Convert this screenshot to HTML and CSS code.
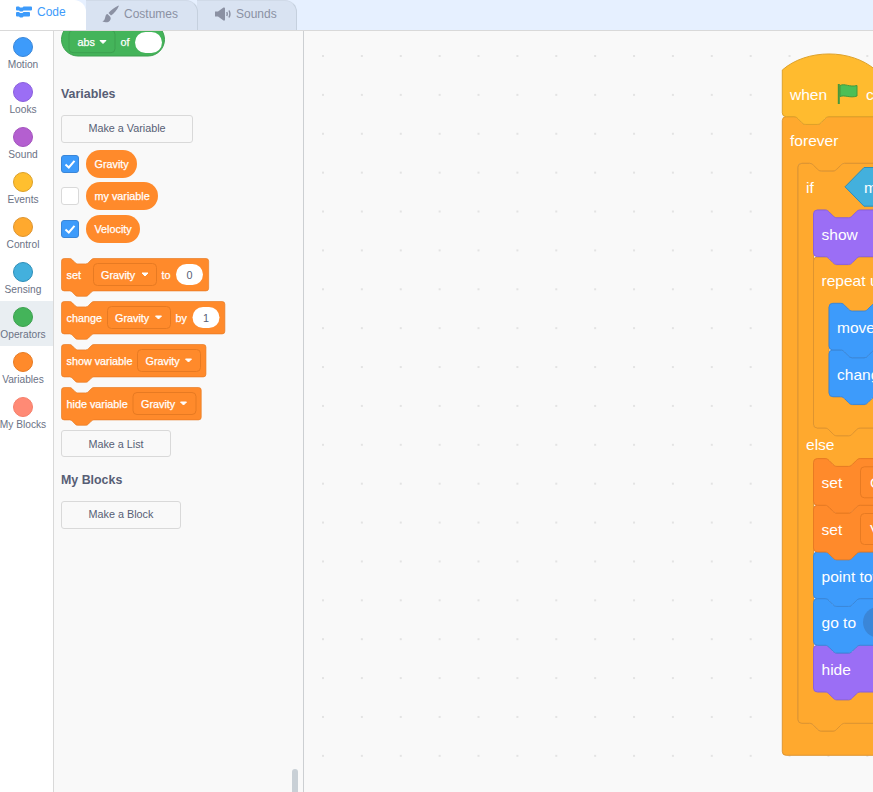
FILE: index.html
```html
<!DOCTYPE html>
<html lang="en">
<head>
    <meta charset="UTF-8">
    <title>Scratch editor</title>
    <link rel="stylesheet" href="styles.css">
</head>
<body>
    <div class="tabs">
        <div class="tab tab-active">
            <svg class="tab-icon" width="16" height="12" viewBox="0 0 16 12">
                <path class="icon-code" d="M1,0.5 H3 L4,1.5 H6.5 L7.5,0.5 H15 Q16,0.5 16,1.5 V3.5 Q16,4.5 15,4.5 H7.5 L6.5,5.5 H4 L3,4.5 H1 Q0,4.5 0,3.5 V1.5 Q0,0.5 1,0.5 Z"/>
                <path class="icon-code" d="M1,6 H3 L4,7 H6.5 L7.5,6 H13 Q14,6 14,7 V9.5 Q14,10.5 13,10.5 H7.5 L6.5,11.5 H4 L3,10.5 H1 Q0,10.5 0,9.5 V7 Q0,6 1,6 Z"/>
            </svg>
            <span>Code</span>
        </div>
        <div class="tab tab-costumes">
            <svg class="tab-icon" width="17" height="18" viewBox="0 0 17 18">
                <path class="icon-gray" d="M16.5,0.5 C13,2 9,5 6.5,8 L9,10.5 C12,8.5 15.5,4.5 16.8,1 Z"/>
                <path class="icon-gray" d="M5.5,9 C3,9.500 3.500,13 2.500,14.500 C2,15.500 1,16 0.500,16.500 C3.500,18 7.500,17.500 8.500,14.500 C9,13 8.500,12 8,11.500 Z"/>
            </svg>
            <span>Costumes</span>
        </div>
        <div class="tab tab-sounds">
            <svg class="tab-icon" width="16" height="14" viewBox="0 0 16 14">
                <path class="icon-gray" d="M0,4.500 H3 L8.500,0.500 Q10,0 10,1.500 V12.500 Q10,14 8.500,13.500 L3,9.500 H0 Z"/>
                <path class="icon-line" d="M11.800,5 Q12.800,7 11.800,9"/>
                <path class="icon-line" d="M14,3.500 Q15.800,7 14,10.500"/>
            </svg>
            <span>Sounds</span>
        </div>
    </div>

    <div class="main">
        <div class="categories">
            <div class="category"><div class="dot dot-motion"></div><span>Motion</span></div>
            <div class="category"><div class="dot dot-looks"></div><span>Looks</span></div>
            <div class="category"><div class="dot dot-sound"></div><span>Sound</span></div>
            <div class="category"><div class="dot dot-events"></div><span>Events</span></div>
            <div class="category"><div class="dot dot-control"></div><span>Control</span></div>
            <div class="category"><div class="dot dot-sensing"></div><span>Sensing</span></div>
            <div class="category category-selected"><div class="dot dot-operators"></div><span>Operators</span></div>
            <div class="category"><div class="dot dot-variables"></div><span>Variables</span></div>
            <div class="category"><div class="dot dot-myblocks"></div><span>My Blocks</span></div>
        </div>

        <div class="palette">
            <svg class="block-abs" width="106" height="26" viewBox="0 8 106 26">
                <rect class="op-fill" x="0.5" y="0" width="103" height="33" rx="16.500"/>
                <rect class="op-fill" x="8" y="7.300" width="46" height="22.400" rx="4"/>
                <text class="b-text" x="16.500" y="22.500">abs</text>
                <path class="caret" d="M39,17.500 H45 L42,20.500 Z"/>
                <text class="b-text" x="59.500" y="22.500">of</text>
                <rect class="oval" x="74" y="9" width="27" height="21" rx="10.500"/>
            </svg>

            <h2 class="palette-title title-variables">Variables</h2>
            <button class="make-btn btn-variable">Make a Variable</button>

            <div class="var-list">
                <div class="var-row">
                    <div class="check check-on"><svg width="18" height="18" viewBox="0 0 18 18"><path d="M4.500,9.500 L7.800,12.500 L13.500,5.800"/></svg></div>
                    <div class="var-pill">Gravity</div>
                </div>
                <div class="var-row">
                    <div class="check"></div>
                    <div class="var-pill">my variable</div>
                </div>
                <div class="var-row">
                    <div class="check check-on"><svg width="18" height="18" viewBox="0 0 18 18"><path d="M4.500,9.500 L7.800,12.500 L13.500,5.800"/></svg></div>
                    <div class="var-pill">Velocity</div>
                </div>
            </div>

            <div class="block-list">
                <svg class="block" width="150" height="39" viewBox="0 0 150 39">
                    <path class="var-fill" transform="translate(0.5 0.5) scale(.675)" d="M0,4 A4,4 0 0 1 4,0 H12 c2,0 3,1 4,2 l4,4 c1,1 2,2 4,2 h12 c2,0 3,-1 4,-2 l4,-4 c1,-1 2,-2 4,-2 H214 a4,4 0 0 1 4,4 V44 a4,4 0 0 1 -4,4 H48 c-2,0 -3,1 -4,2 l-4,4 c-1,1 -2,2 -4,2 h-12 c-2,0 -3,-1 -4,-2 l-4,-4 c-1,-1 -2,-2 -4,-2 H4 a4,4 0 0 1 -4,-4 Z"/>
                    <text class="b-text" x="5.500" y="20.500">set</text>
                    <rect class="var-fill" x="32.500" y="5.500" width="63" height="22" rx="4"/>
                    <text class="b-text" x="40" y="20.500">Gravity</text>
                    <path class="caret" d="M81,15 H87 L84,18 Z"/>
                    <text class="b-text" x="100.500" y="20.500">to</text>
                    <rect class="oval" x="115" y="6" width="27" height="21" rx="10.500"/>
                    <text class="b-value" x="128.500" y="20.500">0</text>
                </svg>
                <svg class="block" width="166" height="39" viewBox="0 0 166 39">
                    <path class="var-fill" transform="translate(0.5 0.5) scale(.675)" d="M0,4 A4,4 0 0 1 4,0 H12 c2,0 3,1 4,2 l4,4 c1,1 2,2 4,2 h12 c2,0 3,-1 4,-2 l4,-4 c1,-1 2,-2 4,-2 H238 a4,4 0 0 1 4,4 V44 a4,4 0 0 1 -4,4 H48 c-2,0 -3,1 -4,2 l-4,4 c-1,1 -2,2 -4,2 h-12 c-2,0 -3,-1 -4,-2 l-4,-4 c-1,-1 -2,-2 -4,-2 H4 a4,4 0 0 1 -4,-4 Z"/>
                    <text class="b-text" x="5.500" y="20.500">change</text>
                    <rect class="var-fill" x="46.500" y="5.500" width="63" height="22" rx="4"/>
                    <text class="b-text" x="54" y="20.500">Gravity</text>
                    <path class="caret" d="M94.500,15 H100.500 L97.500,18 Z"/>
                    <text class="b-text" x="114.500" y="20.500">by</text>
                    <rect class="oval" x="131.500" y="6" width="27" height="21" rx="10.500"/>
                    <text class="b-value" x="145" y="20.500">1</text>
                </svg>
                <svg class="block" width="147" height="39" viewBox="0 0 147 39">
                    <path class="var-fill" transform="translate(0.5 0.5) scale(.675)" d="M0,4 A4,4 0 0 1 4,0 H12 c2,0 3,1 4,2 l4,4 c1,1 2,2 4,2 h12 c2,0 3,-1 4,-2 l4,-4 c1,-1 2,-2 4,-2 H210 a4,4 0 0 1 4,4 V44 a4,4 0 0 1 -4,4 H48 c-2,0 -3,1 -4,2 l-4,4 c-1,1 -2,2 -4,2 h-12 c-2,0 -3,-1 -4,-2 l-4,-4 c-1,-1 -2,-2 -4,-2 H4 a4,4 0 0 1 -4,-4 Z"/>
                    <text class="b-text" x="5.500" y="20.500">show variable</text>
                    <rect class="var-fill" x="76.500" y="5.500" width="63" height="22" rx="4"/>
                    <text class="b-text" x="84.500" y="20.500">Gravity</text>
                    <path class="caret" d="M124.500,15 H130.500 L127.500,18 Z"/>
                </svg>
                <svg class="block" width="142" height="39" viewBox="0 0 142 39">
                    <path class="var-fill" transform="translate(0.5 0.5) scale(.675)" d="M0,4 A4,4 0 0 1 4,0 H12 c2,0 3,1 4,2 l4,4 c1,1 2,2 4,2 h12 c2,0 3,-1 4,-2 l4,-4 c1,-1 2,-2 4,-2 H203 a4,4 0 0 1 4,4 V44 a4,4 0 0 1 -4,4 H48 c-2,0 -3,1 -4,2 l-4,4 c-1,1 -2,2 -4,2 h-12 c-2,0 -3,-1 -4,-2 l-4,-4 c-1,-1 -2,-2 -4,-2 H4 a4,4 0 0 1 -4,-4 Z"/>
                    <text class="b-text" x="5.500" y="20.500">hide variable</text>
                    <rect class="var-fill" x="72" y="5.500" width="63" height="22" rx="4"/>
                    <text class="b-text" x="80" y="20.500">Gravity</text>
                    <path class="caret" d="M119.500,15 H125.500 L122.500,18 Z"/>
                </svg>
            </div>

            <button class="make-btn btn-list">Make a List</button>
            <h2 class="palette-title title-myblocks">My Blocks</h2>
            <button class="make-btn btn-block">Make a Block</button>

            <div class="scrollbar"></div>
        </div>

        <div class="workspace">
            <svg class="script" viewBox="304 31 569 761" width="569" height="761">
                <defs>
                    <pattern id="grid-dots" x="322" y="55" width="38.880" height="38.880" patternUnits="userSpaceOnUse">
                        <rect class="grid-dot" width="2" height="2"/>
                    </pattern>
                    <path id="stack" d="M0,4 A4,4 0 0 1 4,0 H12 c2,0 3,1 4,2 l4,4 c1,1 2,2 4,2 h12 c2,0 3,-1 4,-2 l4,-4 c1,-1 2,-2 4,-2 H396 a4,4 0 0 1 4,4 V44 a4,4 0 0 1 -4,4 H48 c-2,0 -3,1 -4,2 l-4,4 c-1,1 -2,2 -4,2 h-12 c-2,0 -3,-1 -4,-2 l-4,-4 c-1,-1 -2,-2 -4,-2 H4 a4,4 0 0 1 -4,-4 Z"/>
                </defs>
                <rect x="304" y="31" width="569" height="761" fill="url(#grid-dots)"/>

                <!-- forever -->
                <path class="ctl-fill" transform="translate(782.300 116.700) scale(.972)" d="M0,4 A4,4 0 0 1 4,0 H12 c2,0 3,1 4,2 l4,4 c1,1 2,2 4,2 h12 c2,0 3,-1 4,-2 l4,-4 c1,-1 2,-2 4,-2 H396 a4,4 0 0 1 4,4 V44 a4,4 0 0 1 -4,4 H64 c-2,0 -3,1 -4,2 l-4,4 c-1,1 -2,2 -4,2 h-12 c-2,0 -3,-1 -4,-2 l-4,-4 c-1,-1 -2,-2 -4,-2 H20 a4,4 0 0 0 -4,4 V620 a4,4 0 0 0 4,4 H28 c2,0 3,1 4,2 l4,4 c1,1 2,2 4,2 h12 c2,0 3,-1 4,-2 l4,-4 c1,-1 2,-2 4,-2 H396 a4,4 0 0 1 4,4 V653 a4,4 0 0 1 -4,4 H4 a4,4 0 0 1 -4,-4 Z"/>

                <!-- when flag clicked -->
                <path class="hat-fill" transform="translate(782.300 70) scale(.972)" d="M0,0 c25,-22 71,-22 96,0 H400 V44 a4,4 0 0 1 -4,4 H48 c-2,0 -3,1 -4,2 l-4,4 c-1,1 -2,2 -4,2 h-12 c-2,0 -3,-1 -4,-2 l-4,-4 c-1,-1 -2,-2 -4,-2 H4 a4,4 0 0 1 -4,-4 Z"/>

                <!-- if / else -->
                <path class="ctl-fill" transform="translate(798 163.400) scale(.972)" d="M0,4 A4,4 0 0 1 4,0 H12 c2,0 3,1 4,2 l4,4 c1,1 2,2 4,2 h12 c2,0 3,-1 4,-2 l4,-4 c1,-1 2,-2 4,-2 H396 a4,4 0 0 1 4,4 V44 a4,4 0 0 1 -4,4 H64 c-2,0 -3,1 -4,2 l-4,4 c-1,1 -2,2 -4,2 h-12 c-2,0 -3,-1 -4,-2 l-4,-4 c-1,-1 -2,-2 -4,-2 H20 a4,4 0 0 0 -4,4 V268 a4,4 0 0 0 4,4 H28 c2,0 3,1 4,2 l4,4 c1,1 2,2 4,2 h12 c2,0 3,-1 4,-2 l4,-4 c1,-1 2,-2 4,-2 H396 a4,4 0 0 1 4,4 V300 a4,4 0 0 1 -4,4 H64 c-2,0 -3,1 -4,2 l-4,4 c-1,1 -2,2 -4,2 h-12 c-2,0 -3,-1 -4,-2 l-4,-4 c-1,-1 -2,-2 -4,-2 H20 a4,4 0 0 0 -4,4 V540 a4,4 0 0 0 4,4 H28 c2,0 3,1 4,2 l4,4 c1,1 2,2 4,2 h12 c2,0 3,-1 4,-2 l4,-4 c1,-1 2,-2 4,-2 H396 a4,4 0 0 1 4,4 V572 a4,4 0 0 1 -4,4 H48 c-2,0 -3,1 -4,2 l-4,4 c-1,1 -2,2 -4,2 h-12 c-2,0 -3,-1 -4,-2 l-4,-4 c-1,-1 -2,-2 -4,-2 H4 a4,4 0 0 1 -4,-4 Z"/>

                <!-- if condition -->
                <path class="sense-fill" d="M845,186.800 L864,167.500 H880 V206.200 H864 Z"/>

                <!-- repeat until and its stack -->
                <path class="ctl-fill" transform="translate(813.500 257) scale(.972)" d="M0,4 A4,4 0 0 1 4,0 H12 c2,0 3,1 4,2 l4,4 c1,1 2,2 4,2 h12 c2,0 3,-1 4,-2 l4,-4 c1,-1 2,-2 4,-2 H396 a4,4 0 0 1 4,4 V44 a4,4 0 0 1 -4,4 H64 c-2,0 -3,1 -4,2 l-4,4 c-1,1 -2,2 -4,2 h-12 c-2,0 -3,-1 -4,-2 l-4,-4 c-1,-1 -2,-2 -4,-2 H20 a4,4 0 0 0 -4,4 V140 a4,4 0 0 0 4,4 H28 c2,0 3,1 4,2 l4,4 c1,1 2,2 4,2 h12 c2,0 3,-1 4,-2 l4,-4 c1,-1 2,-2 4,-2 H396 a4,4 0 0 1 4,4 V172 a4,4 0 0 1 -4,4 H48 c-2,0 -3,1 -4,2 l-4,4 c-1,1 -2,2 -4,2 h-12 c-2,0 -3,-1 -4,-2 l-4,-4 c-1,-1 -2,-2 -4,-2 H4 a4,4 0 0 1 -4,-4 Z"/>
                <use class="motion-fill" href="#stack" transform="translate(829 350) scale(.972)"/>
                <use class="motion-fill" href="#stack" transform="translate(829 303.300) scale(.972)"/>
                <use class="looks-fill" href="#stack" transform="translate(813.500 210) scale(.972)"/>

                <!-- else stack -->
                <use class="looks-fill" href="#stack" transform="translate(813.500 645.300) scale(.972)"/>
                <use class="motion-fill" href="#stack" transform="translate(813.500 598.600) scale(.972)"/>
                <use class="motion-fill" href="#stack" transform="translate(813.500 552) scale(.972)"/>
                <use class="var-fill" href="#stack" transform="translate(813.500 505.300) scale(.972)"/>
                <use class="var-fill" href="#stack" transform="translate(813.500 458.600) scale(.972)"/>

                <!-- green flag -->
                <path class="flag-pole" d="M838.800,84 V104"/>
                <path class="flag" d="M840,85.500 C845,83 849,87.500 857,85.500 V96 C850,98.500 845,94.500 840,96.500 Z"/>

                <rect class="var-fill" x="860.500" y="466.800" width="60" height="31" rx="4"/>
                <rect class="var-fill" x="860.500" y="513.500" width="60" height="31" rx="4"/>
                <rect class="menu-pill" x="863" y="606.800" width="60" height="31" rx="15.500"/>

                <text class="w-text" x="790" y="100">when</text>
                <text class="w-text" x="866" y="100">clicked</text>
                <text class="w-text" x="790" y="146">forever</text>
                <text class="w-text" x="806" y="193">if</text>
                <text class="w-text" x="864" y="193">mouse down?</text>
                <text class="w-text" x="821.500" y="240">show</text>
                <text class="w-text" x="821.500" y="286">repeat until</text>
                <text class="w-text" x="837" y="333">move 10 steps</text>
                <text class="w-text" x="837" y="380">change x by</text>
                <text class="w-text" x="806" y="450">else</text>
                <text class="w-text" x="821.500" y="488">set</text>
                <text class="w-text" x="870" y="488">Gravity</text>
                <text class="w-text" x="821.500" y="535">set</text>
                <text class="w-text" x="870" y="535">Velocity</text>
                <text class="w-text" x="821.500" y="582">point towards</text>
                <text class="w-text" x="821.500" y="628">go to</text>
                <text class="w-text" x="821.500" y="675">hide</text>
            </svg>
        </div>
    </div>
</body>
</html>
```

FILE: styles.css
```css
* {
    box-sizing: border-box;
}

body {
    margin: 0;
    height: 792px;
    overflow: hidden;
    display: flex;
    flex-direction: column;
    background-color: #fff;
    font-family: "Liberation Sans", Arial, sans-serif;
    color: #575e75;
}

/* top tabs */
.tabs {
    display: flex;
    height: 30px;
    background-color: #e6f0ff;
}

.tab {
    display: flex;
    align-items: center;
    height: 30px;
    padding-bottom: 3px;
    font-size: 12px;
    color: #8b91a3;
    background-color: #d9e3f2;
    border-top-right-radius: 12px;
    border-right: 1px solid #c5d0de;
    border-top: 1px solid #d0dae8;
}

.tab-icon {
    flex-shrink: 0;
    margin-right: 5px;
}

.tab-active {
    width: 86px;
    padding: 0 0 6px 16px;
    color: #3d9bfb;
    background-color: #fff;
    border-top: none;
    border-right: none;
    position: relative;
    z-index: 2;
}

.tab-costumes {
    width: 112px;
    padding-left: 16px;
    position: relative;
    z-index: 1;
}

.tab-sounds {
    width: 100px;
    margin-left: -1px;
    padding-left: 18px;
}

.icon-code {
    fill: #3d9bfb;
}

.icon-gray {
    fill: #8b91a3;
}

.icon-line {
    fill: none;
    stroke: #8b91a3;
    stroke-width: 1.5;
}

.main {
    flex: 1;
    display: flex;
    min-height: 0;
    border-top: 1px solid #d9d9d9;
}

/* category column */
.categories {
    width: 54px;
    flex-shrink: 0;
    background-color: #fff;
    border-right: 1px solid #d9d9d9;
}

.category {
    width: 46px;
    height: 45px;
    padding-top: 6px;
    display: flex;
    flex-direction: column;
    align-items: center;
    font-size: 10.200px;
    white-space: nowrap;
    line-height: 14px;
    color: #6b7285;
}

.category span {
    margin-top: 1px;
}

.category-selected {
    width: 53px;
    padding-right: 7px;
    background-color: #e9eef2;
}

.dot {
    width: 20px;
    height: 20px;
    border-radius: 50%;
    border: 1px solid;
    flex-shrink: 0;
}

.dot-motion { background-color: #3d9bfb; border-color: #3a86d8; }
.dot-looks { background-color: #9b6ef5; border-color: #8a5fdc; }
.dot-sound { background-color: #b45fd0; border-color: #a353bd; }
.dot-events { background-color: #ffbf2f; border-color: #dca028; }
.dot-control { background-color: #ffa92e; border-color: #dd9430; }
.dot-sensing { background-color: #43b0dd; border-color: #2e8eb8; }
.dot-operators { background-color: #44b45a; border-color: #3ca04f; }
.dot-variables { background-color: #ff8a2b; border-color: #e77a22; }
.dot-myblocks { background-color: #ff8a75; border-color: #f57f6b; }

/* block palette */
.palette {
    width: 250px;
    flex-shrink: 0;
    padding-left: 7px;
    position: relative;
    background-color: #f9f9f9;
    border-right: 1px solid #cccfd2;
    overflow: hidden;
}

.palette svg {
    display: block;
}

.palette-title {
    margin: 0;
    font-size: 12.400px;
    line-height: 18px;
    font-weight: bold;
    color: #575e75;
}

.title-variables {
    margin-top: 28px;
}

.title-myblocks {
    margin-top: 13.500px;
}

.make-btn {
    display: block;
    height: 27.500px;
    padding: 0 0 1px;
    font-family: inherit;
    font-size: 10.800px;
    color: #575e75;
    background-color: #f9f9f9;
    border: 1px solid #d9d9d9;
    border-radius: 3px;
}

.btn-variable {
    width: 132px;
    margin-top: 12px;
}

.btn-list {
    width: 110px;
    margin-top: 4px;
    padding: 0;
}

.btn-block {
    width: 120px;
    margin-top: 12.500px;
    padding: 0 0 2px;
}

.var-list {
    margin-top: 7.500px;
    display: flex;
    flex-direction: column;
    gap: 4.400px;
}

.var-row {
    display: flex;
    align-items: center;
    gap: 7px;
}

.check {
    width: 18px;
    height: 18px;
    background-color: #fff;
    border: 1px solid #d9d9d9;
    border-radius: 3px;
}

.check-on {
    background-color: #3d9bfb;
    border-color: #3a86d8;
}

.check svg {
    margin: -1px;
}

.check path {
    fill: none;
    stroke: #fff;
    stroke-width: 2;
}

.var-pill {
    height: 28px;
    padding: 0 8.500px;
    font-size: 10.800px;
    line-height: 28px;
    color: #fff;
    background-color: #ff8a2b;
    border-radius: 14px;
    -webkit-text-stroke: 0.25px #fff;
}

.block-list {
    margin-top: 15px;
    display: flex;
    flex-direction: column;
    gap: 4px;
}

.scrollbar {
    position: absolute;
    left: 238px;
    top: 738px;
    width: 6px;
    height: 30px;
    background-color: #c9d0d6;
    border-radius: 3px 3px 0 0;
}

/* svg block parts */
.b-text {
    font-size: 10.800px;
    fill: #fff;
    stroke: #fff;
    stroke-width: 0.25px;
}

.b-value {
    font-size: 10.800px;
    fill: #575e75;
    text-anchor: middle;
}

.caret {
    fill: #fff;
    stroke: #fff;
    stroke-linejoin: round;
}

.oval {
    fill: #fff;
}

.op-fill {
    fill: #44b45a;
    stroke: #3ca04f;
}

.var-fill {
    fill: #ff8a2b;
    stroke: #e77a22;
}

.ctl-fill {
    fill: #ffa92e;
    stroke: #dd9430;
}

.hat-fill {
    fill: #ffbb2f;
    stroke: #dca028;
}

.motion-fill {
    fill: #3d9bfb;
    stroke: #3a86d8;
}

.looks-fill {
    fill: #9b6ef5;
    stroke: #8a5fdc;
}

.sense-fill {
    fill: #43b0dd;
    stroke: #2e8eb8;
}

.menu-pill {
    fill: #3a86d8;
}

/* workspace */
.workspace {
    flex: 1;
    min-width: 0;
    background-color: #f9f9f9;
    overflow: hidden;
}

.script {
    display: block;
}

.grid-dot {
    fill: #e3e3e3;
}

.w-text {
    font-size: 15.550px;
    fill: #fff;
}

.flag {
    fill: #4cbf56;
    stroke: #45993d;
}

.flag-pole {
    fill: none;
    stroke: #45993d;
    stroke-width: 2;
}
```
